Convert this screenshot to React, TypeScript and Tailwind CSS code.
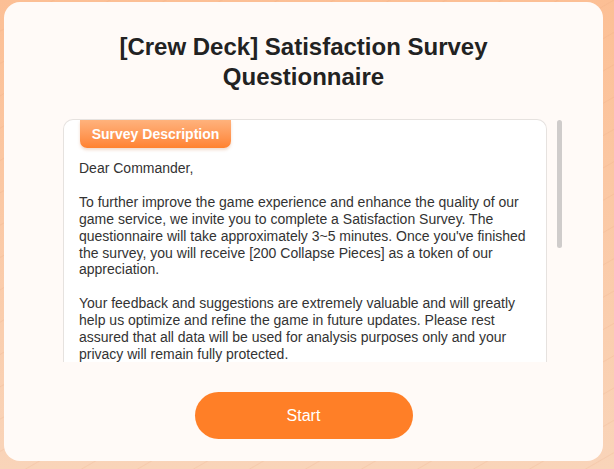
import React from "react";

const paragraphs = [
  "Dear Commander,",
  "To further improve the game experience and enhance the quality of our game service, we invite you to complete a Satisfaction Survey. The questionnaire will take approximately 3~5 minutes. Once you've finished the survey, you will receive [200 Collapse Pieces] as a token of our appreciation.",
  "Your feedback and suggestions are extremely valuable and will greatly help us optimize and refine the game in future updates. Please rest assured that all data will be used for analysis purposes only and your privacy will remain fully protected.",
  "Thank you for your support and understanding.",
];

const SurveyIntro = () => {
  return (
    <div className="relative h-[469px] w-[614px] overflow-hidden bg-gradient-to-b from-[#fcbf95] to-[#f9d4b9] font-['Liberation_Sans',Arial,sans-serif]">
      {/* faint diagonal strokes in the backdrop */}
      <div className="absolute inset-0 bg-[repeating-linear-gradient(150deg,transparent_0px,transparent_26px,rgba(230,160,120,0.18)_27px,transparent_28px)]" />

      <div className="relative ml-[4px] mt-[2px] flex h-[459px] w-[599px] flex-col items-center rounded-[16px] bg-[#fffaf7]">
        <h1 className="mt-[30px] w-[480px] text-center text-[24px] font-bold leading-[30px] text-[#222]">
          [Crew Deck] Satisfaction Survey Questionnaire
        </h1>

        <div className="mt-[27px] flex gap-[10px] self-start pl-[59px]">
          <div className="relative h-[243px] w-[484px] overflow-hidden rounded-t-[10px] border border-b-0 border-[#e6e2df] bg-white">
            <div className="ml-[16px] flex h-[28px] w-[151px] items-center justify-center rounded-b-[7px] bg-gradient-to-b from-[#ffb27c] to-[#ff822e] text-[14px] font-bold text-white shadow-[0_2px_3px_rgba(200,110,50,0.25)]">
              Survey Description
            </div>
            <div className="px-[15px] pt-[12px] text-[14px] leading-[16.9px] text-[#333]">
              {paragraphs.map((p, i) => (
                <p key={i} className="mb-[16.9px]">
                  {p}
                </p>
              ))}
            </div>
          </div>
          <div className="mt-[1px] h-[128px] w-[5px] rounded-full bg-[#cfcccb]" />
        </div>

        <button className="mt-[30px] h-[47px] w-[218px] rounded-full bg-[#ff7f27] text-[16px] text-white">
          Start
        </button>
      </div>
    </div>
  );
};

export default function App() {
  return <SurveyIntro />;
}
